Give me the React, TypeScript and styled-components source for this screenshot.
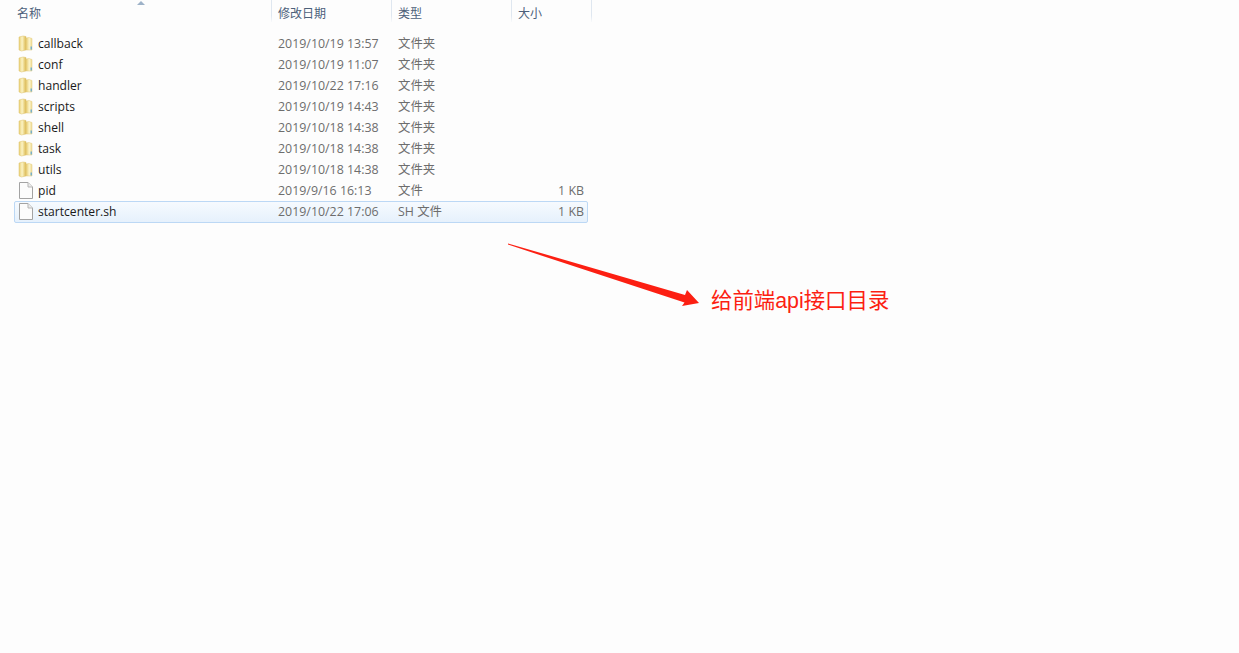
import styled, { createGlobalStyle } from "styled-components";

const rows = [
    { name: "callback", date: "2019/10/19 13:57", type: "文件夹", size: "", kind: "folder" },
    { name: "conf", date: "2019/10/19 11:07", type: "文件夹", size: "", kind: "folder" },
    { name: "handler", date: "2019/10/22 17:16", type: "文件夹", size: "", kind: "folder" },
    { name: "scripts", date: "2019/10/19 14:43", type: "文件夹", size: "", kind: "folder" },
    { name: "shell", date: "2019/10/18 14:38", type: "文件夹", size: "", kind: "folder" },
    { name: "task", date: "2019/10/18 14:38", type: "文件夹", size: "", kind: "folder" },
    { name: "utils", date: "2019/10/18 14:38", type: "文件夹", size: "", kind: "folder" },
    { name: "pid", date: "2019/9/16 16:13", type: "文件", size: "1 KB", kind: "file" },
    { name: "startcenter.sh", date: "2019/10/22 17:06", type: "SH 文件", size: "1 KB", kind: "file", selected: true },
];

const FolderIcon = () => (
    <svg width="16" height="17" viewBox="0 0 16 17">
        <defs>
            <linearGradient id="folderBack" x1="0" x2="1" y1="0" y2="0">
                <stop offset="0" stopColor="#e9cf74" />
                <stop offset="0.45" stopColor="#fbf3c4" />
                <stop offset="1" stopColor="#dcb94f" />
            </linearGradient>
            <linearGradient id="folderFront" x1="0" x2="1" y1="0" y2="0">
                <stop offset="0" stopColor="#e6c869" />
                <stop offset="0.55" stopColor="#fbf4ca" />
                <stop offset="1" stopColor="#f0dc94" />
            </linearGradient>
        </defs>
        <path d="M1 2 L5 1 L8 1.5 L8 15 L3.5 16 L1 15 Z" fill="url(#folderBack)" stroke="#dcc06a" strokeWidth="0.5" />
        <path d="M8 3 L11 2.5 L14 3.5 L14 15 L8 15 Z" fill="url(#folderFront)" stroke="#e2ca7c" strokeWidth="0.5" />
        <rect x="12.6" y="11.5" width="1.2" height="3" fill="#5aa5d8" />
    </svg>
);

const FileIcon = () => (
    <svg width="14" height="17" viewBox="0 0 14 17">
        <path d="M0.5 0.5 H9 L13.5 5 V16.5 H0.5 Z" fill="#fcfcfc" stroke="#a3a3a3" />
        <path d="M9 0.5 V5 H13.5" fill="#ececec" stroke="#b5b5b5" />
    </svg>
);

const Arrow = () => (
    <svg width="200" height="75" viewBox="0 0 200 75">
        <path d="M8 8.4 L8 9.6 L184.5 67.5 L182 71 L199 68 L187 55 L185 60 Z" fill="#fc1f12" />
    </svg>
);

export default function App() {
    return (
        <Page>
            <GlobalStyle />
            <Header>
                <HeaderCell $width={258} $pad={3}>
                    名称
                    <SortCaret />
                </HeaderCell>
                <HeaderCell $width={120} $pad={6}>修改日期</HeaderCell>
                <HeaderCell $width={120} $pad={6}>类型</HeaderCell>
                <HeaderCell $width={80} $pad={6}>大小</HeaderCell>
            </Header>
            <List>
                {rows.map((row) => (
                    <Row key={row.name} $selected={row.selected}>
                        <NameCell>
                            <IconSlot>{row.kind === "folder" ? <FolderIcon /> : <FileIcon />}</IconSlot>
                            {row.name}
                        </NameCell>
                        <MetaCell>{row.date}</MetaCell>
                        <MetaCell>{row.type}</MetaCell>
                        <SizeCell>{row.size}</SizeCell>
                    </Row>
                ))}
            </List>
            <Note>
                <Arrow />
                <NoteText>给前端api接口目录</NoteText>
            </Note>
        </Page>
    );
}

const GlobalStyle = createGlobalStyle`
    html, body {
        margin: 0;
        padding: 0;
        background: #fdfdfd;
    }
    body {
        font-family: "Open Sans", "Noto Sans CJK SC", sans-serif;
    }
`;

const Page = styled.div`
    position: relative;
    width: 1239px;
    height: 653px;
    overflow: hidden;
    background: #fdfdfd;
`;

const Header = styled.div`
    display: flex;
    height: 22px;
    padding-left: 14px;
    padding-bottom: 11px;
`;

const HeaderCell = styled.div<{ $width: number; $pad: number }>`
    position: relative;
    box-sizing: border-box;
    width: ${(p) => p.$width}px;
    padding-left: ${(p) => p.$pad}px;
    padding-top: 5px;
    font-size: 12px;
    line-height: 17px;
    color: #4c607a;
    border-right: 1px solid;
    border-image: linear-gradient(#dfe7f0, #dfe7f0 70%, #fdfdfd) 1;
`;

const SortCaret = styled.span`
    position: absolute;
    left: 123px;
    top: 1px;
    width: 0;
    height: 0;
    border-left: 4px solid transparent;
    border-right: 4px solid transparent;
    border-bottom: 4px solid #9db2c8;
`;

const List = styled.div`
    display: flex;
    flex-direction: column;
    width: 574px;
    margin-left: 14px;
`;

const Row = styled.div<{ $selected?: boolean }>`
    box-sizing: border-box;
    display: grid;
    grid-template-columns: 264px 120px 120px 70px;
    height: ${(p) => (p.$selected ? 22 : 21)}px;
    padding-bottom: ${(p) => (p.$selected ? 3 : 2)}px;
    align-items: center;
    border: 1px solid ${(p) => (p.$selected ? "#bcd8f5" : "transparent")};
    border-radius: 2px;
    background: ${(p) => (p.$selected ? "linear-gradient(#f6fafe, #e6f1fc)" : "transparent")};
`;

const NameCell = styled.div`
    display: flex;
    align-items: center;
    margin-left: -1px;
    font-size: 12.1px;
    color: #1a1a1a;
`;

const IconSlot = styled.span`
    display: flex;
    justify-content: center;
    width: 16px;
    margin-left: 4px;
    margin-right: 4px;
`;

const MetaCell = styled.div`
    margin-left: -1px;
    font-size: 12.4px;
    color: #6d6d6d;
`;

const SizeCell = styled(MetaCell)`
    text-align: right;
    padding-right: 5px;
`;

const Note = styled.div`
    position: absolute;
    left: 500px;
    top: 235px;
    display: flex;
    align-items: flex-start;
`;

const NoteText = styled.div`
    margin-left: 11px;
    margin-top: 51px;
    font-family: "Liberation Sans", "Noto Sans CJK SC", sans-serif;
    font-size: 21.4px;
    line-height: 30px;
    color: #fc1f12;
    white-space: nowrap;
`;
